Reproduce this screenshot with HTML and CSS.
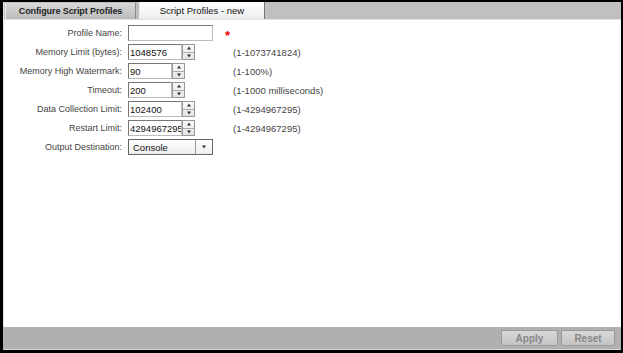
FILE: index.html
```html
<!DOCTYPE html>
<html>
<head>
<meta charset="utf-8">
<link rel="stylesheet" href="styles.css">
</head>
<body>
<div class="frame">
  <div class="tabbar">
    <div class="tab tab-off">Configure Script Profiles</div>
    <div class="tab tab-on">Script Profiles - new</div>
  </div>
  <div class="content">
    <div class="row">
      <label class="lbl">Profile Name:</label>
      <div class="text wide"></div>
      <span class="req">*</span>
    </div>
    <div class="row">
      <label class="lbl">Memory Limit (bytes):</label>
      <div class="spin"><div class="text w54">1048576</div><div class="arrows"><span class="up"></span><span class="dn"></span></div></div>
      <span class="hint">(1-1073741824)</span>
    </div>
    <div class="row">
      <label class="lbl">Memory High Watermark:</label>
      <div class="spin"><div class="text w44">90</div><div class="arrows"><span class="up"></span><span class="dn"></span></div></div>
      <span class="hint h2">(1-100%)</span>
    </div>
    <div class="row">
      <label class="lbl">Timeout:</label>
      <div class="spin"><div class="text w44">200</div><div class="arrows"><span class="up"></span><span class="dn"></span></div></div>
      <span class="hint h2">(1-1000 milliseconds)</span>
    </div>
    <div class="row">
      <label class="lbl">Data Collection Limit:</label>
      <div class="spin"><div class="text w54">102400</div><div class="arrows"><span class="up"></span><span class="dn"></span></div></div>
      <span class="hint">(1-4294967295)</span>
    </div>
    <div class="row">
      <label class="lbl">Restart Limit:</label>
      <div class="spin"><div class="text w54">4294967295</div><div class="arrows"><span class="up"></span><span class="dn"></span></div></div>
      <span class="hint">(1-4294967295)</span>
    </div>
    <div class="row">
      <label class="lbl">Output Destination:</label>
      <div class="select"><div class="sel-text">Console</div><div class="sel-btn"><span class="dn"></span></div></div>
    </div>
  </div>
  <div class="footer">
    <div class="btn">Apply</div>
    <div class="btn">Reset</div>
  </div>
</div>
</body>
</html>
```
FILE: styles.css
```css
html, body { margin: 0; padding: 0; background: #000; }
body { font-family: "Liberation Sans", Arial, sans-serif; font-size: 10px; }
.frame {
  width: 623px; height: 353px; box-sizing: border-box;
  border-style: solid; border-color: #000;
  border-width: 2px 2px 3px 3px;
  background: #fff;
  display: flex; flex-direction: column;
}
.tabbar {
  height: 17px; background: #c0c0c0;
  border-bottom: 1px solid #e2e2e2;
  border-left: 1px solid #e8e8e8;
  display: flex; align-items: flex-end; padding-left: 1px; gap: 3px;
}
.tab {
  height: 16px; box-sizing: border-box; display: flex; align-items: center; justify-content: center;
  font-size: 9px; color: #111;
}
.tab-off {
  width: 131px;
  background: linear-gradient(#d8d8d8, #bcbcbc);
  border-left: 1px solid #f0f0f0; border-right: 1px solid #888;
  font-weight: bold; color: #222; letter-spacing: -0.1px;
}
.tab-on {
  width: 126px; height: 17px; font-size: 9.5px;
  background: linear-gradient(#ffffff, #ececec);
  border-left: 1px solid #eee; border-right: 1px solid #777;
}
.content {
  flex: 1; border-left: 1px solid #e4e4e4;
  padding-top: 5px; display: flex; flex-direction: column; gap: 3px;
}
.row { display: flex; align-items: center; height: 16px; }
.lbl { width: 118px; text-align: right; color: #444; font-size: 9px; margin-right: 6px; }
.text {
  height: 16px; box-sizing: border-box; border: 1px solid #777; border-color: #777 #bbb #bbb #777;
  font-size: 9.5px; color: #111; padding-left: 1px; display: flex; align-items: center; background: #fff;
  overflow: hidden; white-space: nowrap;
}
.wide { width: 85px; }
.w54 { width: 54px; }
.w44 { width: 44px; }
.req { color: #e00; font-weight: bold; font-size: 13px; margin-left: 12px; margin-top: 5px; }
.spin { display: flex; }
.arrows {
  width: 13px; height: 16px; box-sizing: border-box; border: 1px solid #999;
  display: flex; flex-direction: column; background: linear-gradient(#fafafa, #e4e4e4);
}
.arrows span { flex: 1; position: relative; }
.arrows .up { border-bottom: 1px solid #aaa; }
.up::after, .dn::after {
  content: ""; position: absolute; left: 50%; top: 50%; transform: translate(-50%, -50%);
  border-left: 2px solid transparent; border-right: 2px solid transparent;
}
.up::after { border-bottom: 3px solid #333; }
.dn::after { border-top: 3px solid #333; }
.hint { margin-left: 38px; color: #444; font-size: 9.5px; }
.h2 { margin-left: 48px; }
.select {
  width: 85px; height: 16px; box-sizing: border-box; border: 1px solid #666; display: flex;
  background: linear-gradient(#fff, #eee);
}
.sel-text { flex: 1; padding-left: 4px; display: flex; align-items: center; color: #111; font-size: 9.5px; }
.sel-btn { width: 16px; border-left: 1px solid #999; position: relative; }
.sel-btn .dn { position: absolute; inset: 0; }
.footer {
  height: 22px; background: #b0b0b0; border-bottom: 1px solid #d8d8d8;
  display: flex; align-items: center; justify-content: flex-end; gap: 3px; padding-right: 6px;
}
.btn {
  width: 57px; height: 16px; box-sizing: border-box; border: 1px solid #9a9a9a; border-radius: 2px;
  background: linear-gradient(#d8d8d8, #c4c4c4);
  color: #888; font-weight: bold; font-size: 10px;
  display: flex; align-items: center; justify-content: center;
}
.btn + .btn { width: 54px; }
```
